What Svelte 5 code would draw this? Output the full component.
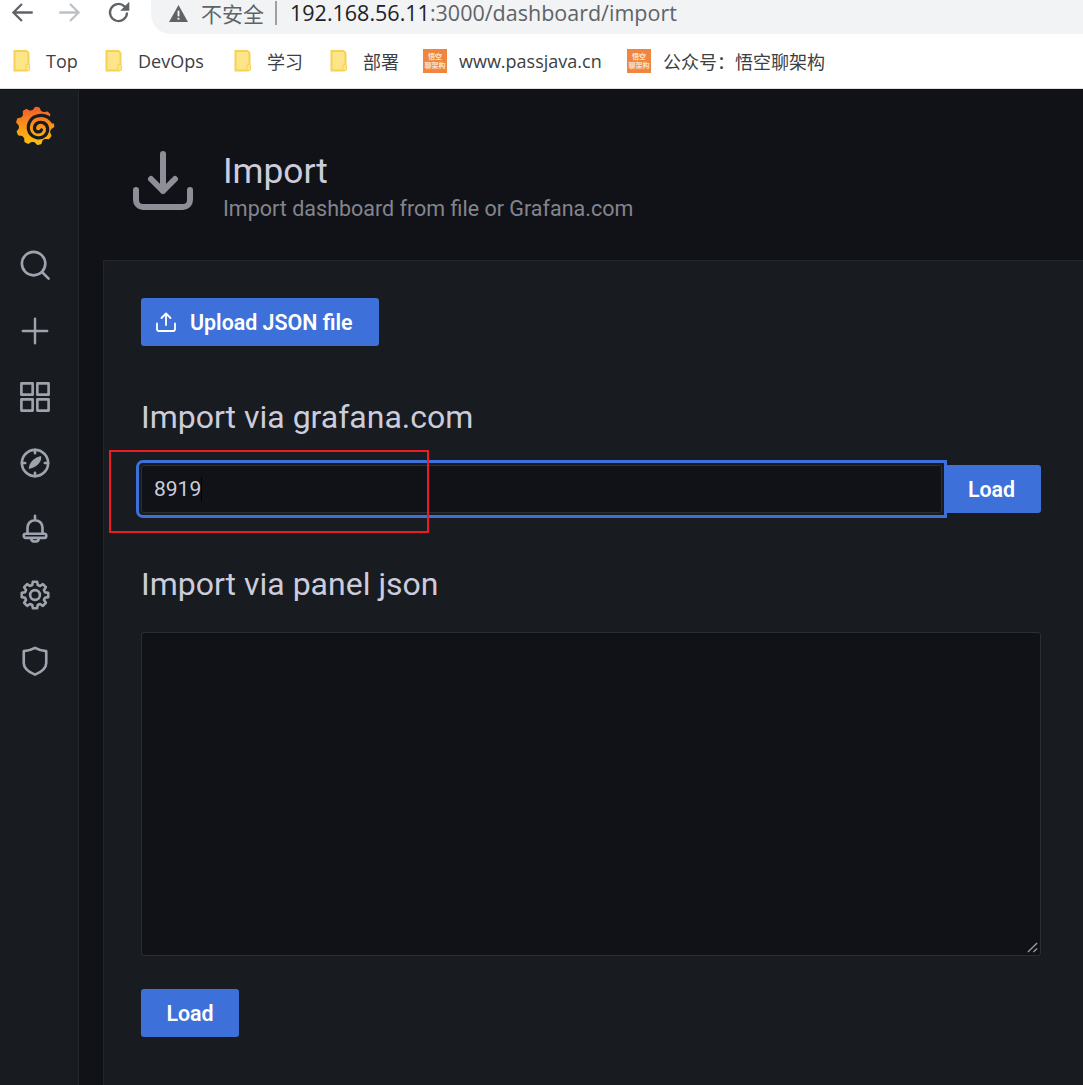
<script>
  const bookmarks = [
    { label: 'Top', kind: 'folder' },
    { label: 'DevOps', kind: 'folder' },
    { label: '学习', kind: 'folder' },
    { label: '部署', kind: 'folder' },
    { label: 'www.passjava.cn', kind: 'logo' },
    { label: '公众号：悟空聊架构', kind: 'logo' }
  ];

  function gear(cx, cy, R, r, n, w1, w2, start = 0) {
    const pts = [];
    for (let i = 0; i < n; i++) {
      const a = start + (i * 2 * Math.PI) / n;
      for (const [rad, off] of [[r, -w2], [R, -w1], [R, w1], [r, w2]]) {
        pts.push(`${(cx + rad * Math.cos(a + off)).toFixed(2)} ${(cy + rad * Math.sin(a + off)).toFixed(2)}`);
      }
    }
    return 'M' + pts.join('L') + 'Z';
  }
  const logoGear = gear(19, 21, 18.5, 15.5, 9, 0.09, 0.24, -1.45);
  const cogGear = gear(16, 16, 14.3, 11, 8, 0.16, 0.27, -Math.PI / 2);
</script>

<div class="screen">
  <header class="toolbar">
    <svg class="nav back" viewBox="0 0 22 22"><path d="M20 11H3M10.500 3.500 3 11l7.500 7.500" /></svg>
    <svg class="nav forward" viewBox="0 0 22 22"><path d="M2 11h17M11.500 3.500 19 11l-7.500 7.500" /></svg>
    <svg class="nav reload" viewBox="0 0 22 22"><path d="M18.500 11a7.500 7.500 0 1 1-2.300-5.400L19 8.200" /><path class="solid" d="M20.500 1.500v8h-8z" /></svg>
    <div class="omnibox">
      <svg class="warn" viewBox="0 0 20 18"><path d="M10 0 20 18H0z" /><rect x="9" y="6" width="2" height="6" /><rect x="9" y="13.500" width="2" height="2" /></svg>
      <span class="insecure">不安全</span>
      <span class="sep"></span>
      <span class="host">192.168.56.11</span><span class="path">:3000/dashboard/import</span>
    </div>
  </header>

  <nav class="bookmarks">
    {#each bookmarks as b}
      <div class="bookmark {b.kind}">
        {#if b.kind === 'folder'}
          <svg class="folder-icon" viewBox="0 0 18 22">
            <path d="M1.500 1h11a3 3 0 0 1 3 3v15a1.500 1.500 0 0 1-1.500 1.500H1.500z" fill="#fde68a" stroke="#f6d155" stroke-width="2" />
            <rect x="13" y="14.500" width="3.500" height="6" rx="1" fill="#fde68a" stroke="#f6d155" stroke-width="1" />
          </svg>
        {:else}
          <div class="logo-icon">
            <span class="l1">悟空</span>
            <span class="l2">聊架构</span>
          </div>
        {/if}
        <span class="bm-label">{b.label}</span>
      </div>
    {/each}
  </nav>

  <div class="app">
    <aside class="sidebar">
      <svg class="grafana" viewBox="0 0 40 41">
        <defs>
          <linearGradient id="gf" gradientUnits="userSpaceOnUse" x1="0" y1="41" x2="0" y2="1">
            <stop offset="0" stop-color="#fcc30d" />
            <stop offset="0.5" stop-color="#f9941b" />
            <stop offset="1" stop-color="#f05a28" />
          </linearGradient>
        </defs>
        <path d={logoGear} fill="url(#gf)" stroke="url(#gf)" stroke-width="1.500" stroke-linejoin="round" />
        <path fill="none" stroke="#181b1f" stroke-width="3.200" stroke-linecap="round" d="M37 17C32 10 26 9.500 21 11 13.500 13 10.500 21 13.500 27.500 16.500 33 24.500 34.500 29 30.500 33 26.500 32.500 20 27.500 17.800 22.500 16 18 19 18.500 24 19.500 27.500 24 28 25.500 25" />
      </svg>

      <svg class="side thick" viewBox="0 0 32 32"><circle cx="14.500" cy="14.500" r="12.500" /><path d="M24 24 30.500 30.500" /></svg>
      <svg class="side plus" viewBox="0 0 32 32"><path d="M16 3v26M3 16h26" /></svg>
      <svg class="side thick" viewBox="0 0 32 32"><rect x="1.500" y="1.500" width="12" height="12" /><rect x="18.500" y="1.500" width="12" height="12" /><rect x="1.500" y="18.500" width="12" height="12" /><rect x="18.500" y="18.500" width="12" height="12" /></svg>
      <svg class="side thick" viewBox="0 0 32 32"><circle cx="16" cy="16" r="14" /><path d="M16 2v3.500M16 26.500V30M2 16h3.500M26.500 16H30" /><path class="fill" d="M22.500 8.500C23.500 14 19.500 20 9.500 22.500 9 16 15 10 22.500 8.500z" /></svg>
      <svg class="side thick" viewBox="0 0 32 32"><path d="M16 2v4M8 20.500V14.500a8 8 0 0 1 16 0v6M6 21h20a2 2 0 0 1 2 2v.500a2 2 0 0 1-2 2H6a2 2 0 0 1-2-2V23a2 2 0 0 1 2-2zM12 26c0 4.500 8 4.500 8 0" /></svg>
      <svg class="side thick" viewBox="0 0 32 32"><circle cx="16" cy="16" r="5.200" /><path d={cogGear} /></svg>
      <svg class="side thick" viewBox="0 0 32 32"><path d="M16 2c3.500 2 7 3 12 3.500V18c0 5.500-5 9.500-12 12.500C9 27.500 4 23.500 4 18V5.500C9 5 12.500 4 16 2z" /></svg>
    </aside>

    <main class="main">
      <section class="page-head">
        <svg class="head-icon" viewBox="0 0 60 60">
          <path d="M30 3v37M18 28l12 12 12-12M3 39v10a7 7 0 0 0 7 7h40a7 7 0 0 0 7-7V39" />
        </svg>
        <div class="titles">
          <h1>Import</h1>
          <p>Import dashboard from file or Grafana.com</p>
        </div>
      </section>

      <section class="panel">
        <button class="btn upload">
          <svg viewBox="0 0 20 20"><path d="M10 13V1.500M5.500 6 10 1.500 14.500 6M1 11.500V17a2 2 0 0 0 2 2h14a2 2 0 0 0 2-2v-5.500" /></svg>
          Upload JSON file
        </button>

        <h2 class="first">Import via grafana.com</h2>
        <div class="row">
          <div class="focus">
            <div class="input"><span class="val">8919</span></div>
          </div>
          <button class="btn load-side">Load</button>
        </div>

        <h2 class="second">Import via panel json</h2>
        <div class="textarea">
          <svg class="grip" viewBox="0 0 12 12"><path d="M1 11 11 1M7 11l4-4" /></svg>
        </div>
        <button class="btn load-bottom">Load</button>
      </section>
    </main>
  </div>

  <div class="annotation"></div>
</div>

<style>
  :global(body) {
    margin: 0;
    background: #111217;
  }
  .screen {
    position: relative;
    width: 1083px;
    height: 1085px;
    overflow: hidden;
    display: flex;
    flex-direction: column;
    font-family: Roboto, sans-serif;
  }
  .toolbar {
    height: 34px;
    background: #fff;
    display: flex;
    align-items: flex-start;
    flex: none;
  }
  .nav {
    width: 25px;
    height: 25px;
    flex: none;
    margin-top: 0;
    fill: none;
    stroke-width: 2;
  }
  .nav path.solid { fill: #5f6368; stroke: none; }
  .back { margin-left: 10px; stroke: #5f6368; }
  .forward { margin-left: 22px; stroke: #bdc1c6; }
  .reload { margin-left: 24px; stroke: #5f6368; }
  .omnibox {
    margin-left: 20px;
    flex: 1;
    height: 34px;
    background: #f1f3f4;
    border-bottom-left-radius: 20px;
    display: flex;
    align-items: center;
    padding: 0 0 8px 18px;
    box-sizing: border-box;
    font-family: "Open Sans", "Noto Sans CJK SC", sans-serif;
    font-size: 21.5px;
    line-height: 22px;
    color: #5f6368;
    white-space: nowrap;
  }
  .warn { width: 19px; height: 17px; fill: #5f6368; flex: none; }
  .warn rect { fill: #f1f3f4; }
  .insecure {
    margin-left: 13px;
    font-family: "Noto Sans CJK SC", sans-serif;
    font-size: 21px;
  }
  .sep {
    width: 2px;
    height: 24px;
    background: #9aa0a6;
    margin: 0 13px 0 11px;
    flex: none;
  }
  .host { color: #202124; }
  .bookmarks {
    height: 54px;
    background: #fff;
    border-bottom: 1px solid #e0e0e0;
    box-sizing: content-box;
    display: flex;
    align-items: center;
    flex: none;
    padding-left: 13px;
    font-family: "Open Sans", "Noto Sans CJK SC", sans-serif;
    font-size: 18px;
    color: #3c4043;
  }
  .bookmark { display: flex; align-items: center; white-space: nowrap; }
  .bookmark:nth-child(1) { width: 92px; }
  .bookmark:nth-child(2) { width: 129px; }
  .bookmark:nth-child(3) { width: 96px; }
  .bookmark:nth-child(4) { width: 93px; }
  .bookmark:nth-child(5) { width: 204px; }
  .folder-icon { width: 18px; height: 22px; flex: none; margin-right: 15px; }
  .logo-icon {
    width: 24px;
    height: 24px;
    background: #ee8640;
    flex: none;
    margin-right: 12px;
    display: flex;
    flex-direction: column;
    align-items: center;
    justify-content: center;
    color: #fbe2cf;
    font-family: "Noto Sans CJK SC", sans-serif;
    font-size: 7px;
    line-height: 9px;
    font-weight: 700;
  }
  .bm-label { display: block; }
  .app {
    flex: 1;
    display: flex;
    min-height: 0;
    border-top: 1px solid #111;
  }
  .sidebar {
    width: 78px;
    flex: none;
    background: #181b20;
    border-right: 1px solid #25282d;
    box-sizing: content-box;
    display: flex;
    flex-direction: column;
    align-items: center;
  }
  .grafana {
    width: 40px;
    height: 41px;
    flex: none;
    margin: 15px 6px 0 0;
  }
  .side {
    width: 30px;
    height: 30px;
    flex: none;
    margin: 36px 8px 0 0;
    fill: none;
    stroke: #9ea3ad;
    stroke-width: 2.200;
    stroke-linecap: round;
    stroke-linejoin: round;
  }
  .side.thick { stroke-width: 2.800; }
  .side.plus { stroke-width: 2.600; }
  .sidebar .grafana + .side { margin-top: 104px; }
  .side path.fill { fill: #9ea3ad; stroke: none; }
  .main {
    flex: 1;
    min-width: 0;
    background: #111217;
    display: flex;
    flex-direction: column;
  }
  .page-head {
    height: 170px;
    flex: none;
    display: flex;
    padding-left: 54px;
    box-sizing: border-box;
  }
  .head-icon {
    width: 60px;
    height: 60px;
    flex: none;
    margin-top: 61px;
    fill: none;
    stroke: #8e8e98;
    stroke-width: 6;
    stroke-linecap: round;
    stroke-linejoin: round;
  }
  .titles { margin-left: 30px; padding-top: 60px; }
  h1 {
    margin: 0;
    font-size: 35.3px;
    font-weight: 400;
    line-height: 42px;
    color: #ccccdc;
  }
  .titles p {
    margin: 5px 0 0;
    font-size: 21.5px;
    line-height: 24px;
    color: #83858e;
  }
  .panel {
    flex: 1;
    margin-left: 24px;
    background: #181b1f;
    border: 1px solid #22252b;
    border-right: none;
    border-bottom: none;
    padding: 37px 42px 0 37px;
    display: flex;
    flex-direction: column;
    align-items: flex-start;
    box-sizing: border-box;
  }
  .btn {
    border: none;
    background: #3d71d9;
    color: #fff;
    font-family: Roboto, sans-serif;
    font-weight: 600;
    font-size: 21.4px;
    height: 48px;
    border-radius: 3px;
    padding: 0;
    display: flex;
    align-items: center;
    justify-content: center;
    flex: none;
  }
  .upload { width: 238px; gap: 14px; justify-content: flex-start; padding-left: 15px; }
  .upload svg {
    width: 20px;
    height: 20px;
    fill: none;
    stroke: #fff;
    stroke-width: 1.800;
    stroke-linecap: round;
    stroke-linejoin: round;
  }
  h2 {
    margin: 0;
    font-weight: 400;
    font-size: 32px;
    line-height: 36px;
    color: #ccccdc;
  }
  h2.first { margin-top: 53px; }
  h2.second { margin-top: 53px; }
  .row {
    display: flex;
    align-items: flex-start;
    width: 900px;
    margin-top: 30px;
    position: relative;
  }
  .focus {
    flex: 1;
    margin: -5px 0 -5px -5px;
    height: 58px;
    border: 3px solid #3d71d9;
    border-radius: 7px 0 0 7px;
    padding: 2px;
    box-sizing: border-box;
    position: relative;
    z-index: 1;
  }
  .input {
    height: 100%;
    background: #111217;
    border: 1px solid #2b2e35;
    border-radius: 3px;
    box-sizing: border-box;
    padding-left: 12px;
    display: flex;
    align-items: center;
    font-family: Roboto, sans-serif;
    font-size: 21px;
    color: #ccccdc;
  }
  .val { border-right: 1px solid #000; line-height: 24px; height: 24px; display: block; }
  .load-side { width: 94px; padding-right: 5px; border-radius: 0 3px 3px 0; }
  .textarea {
    margin-top: 30px;
    width: 900px;
    height: 324px;
    background: #111217;
    border: 1px solid #2b2e35;
    border-radius: 3px;
    box-sizing: border-box;
    position: relative;
  }
  .grip {
    position: absolute;
    right: 2px;
    bottom: 2px;
    width: 11px;
    height: 11px;
    fill: none;
    stroke: #999;
    stroke-width: 1.500;
  }
  .load-bottom { width: 98px; margin-top: 33px; }
  .annotation {
    position: absolute;
    z-index: 2;
    left: 109px;
    top: 450px;
    width: 320px;
    height: 83px;
    border: 2px solid #ed1c24;
    box-sizing: border-box;
    pointer-events: none;
  }
</style>
